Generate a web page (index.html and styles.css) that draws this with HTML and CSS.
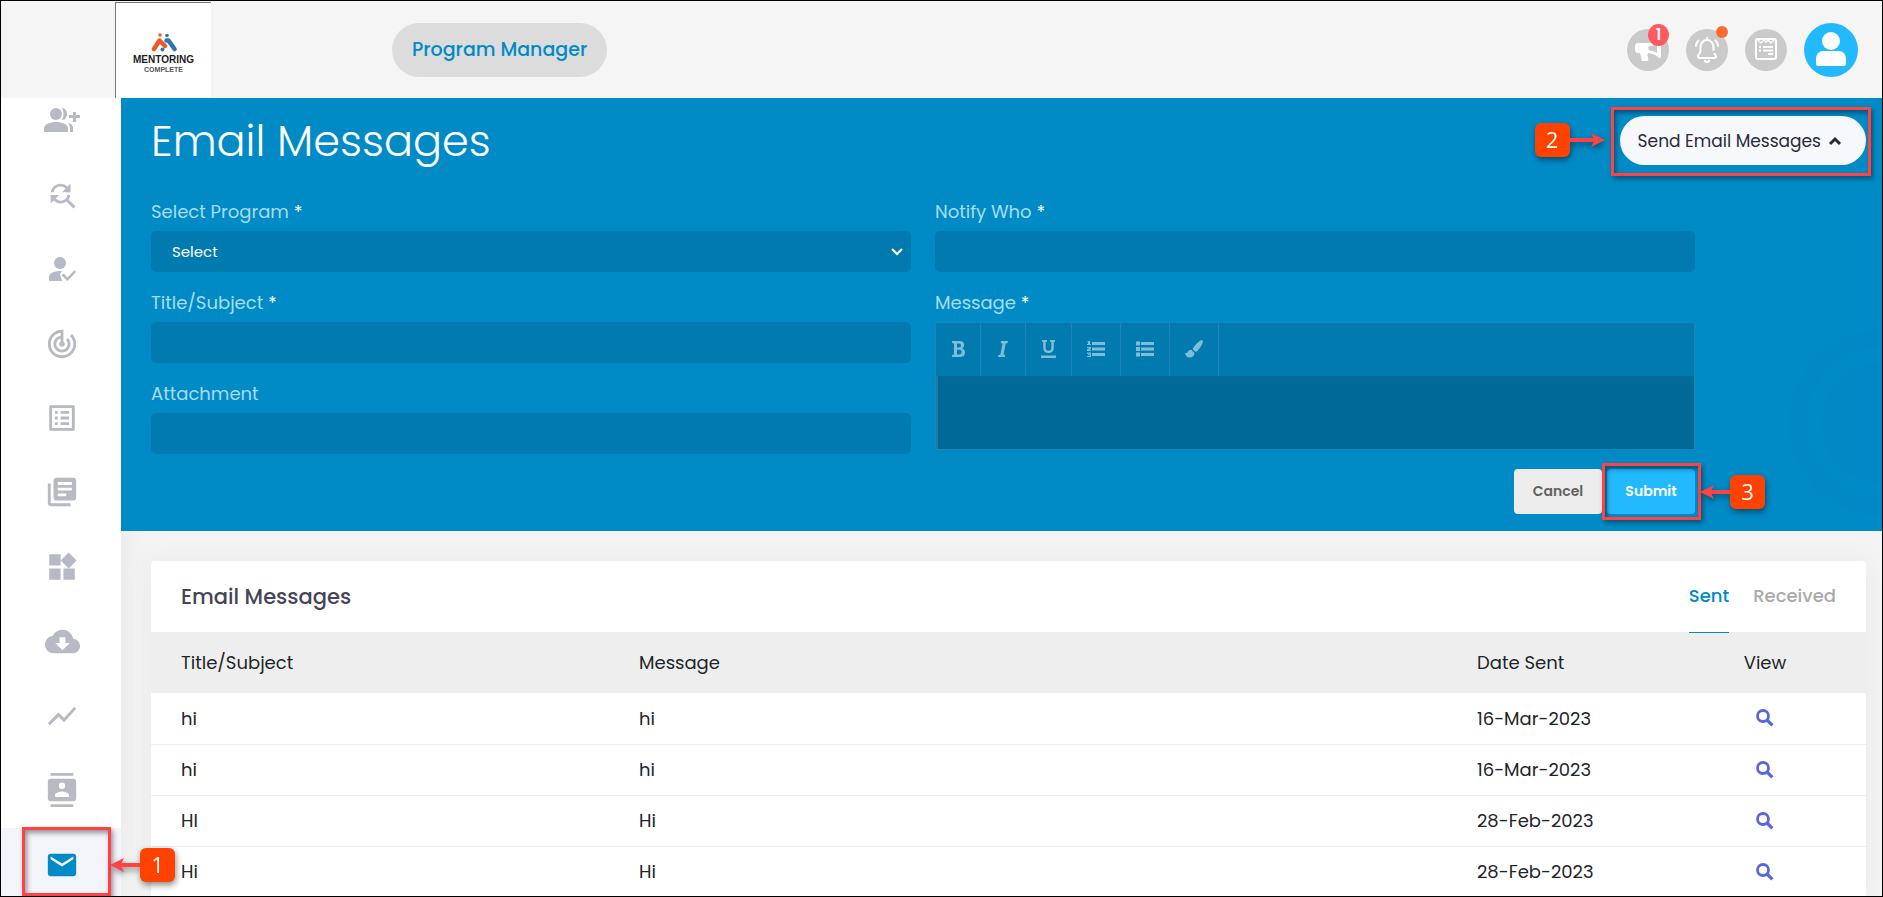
FILE: index.html
```html
<!DOCTYPE html>
<html lang="en">
<head>
<meta charset="utf-8">
<title>Email Messages</title>
<link rel="stylesheet" href="styles.css">
</head>
<body>
<svg class="sprite" aria-hidden="true">
  <symbol id="search" viewBox="0 0 18 18"><circle cx="7" cy="7" r="5.500" fill="none" stroke="currentColor" stroke-width="2.800"/><path d="M11 11l5.400 5.400" stroke="currentColor" stroke-width="3.200"/></symbol>
  <symbol id="arrow-left" viewBox="0 0 30 16"><path d="M0 8L14 1l-2.500 5H30v4H11.500L14 15z" fill="currentColor"/></symbol>
</svg>
<div class="app">
  <header class="topbar">
    <a class="logo" href="#" aria-label="Mentoring Complete">
      <svg class="logo-mark" viewBox="0 0 26 20" aria-hidden="true">
        <circle cx="9" cy="3" r="1.800" fill="#e8642b"/><circle cx="16" cy="3.500" r="1.800" fill="#2f76a8"/>
        <path d="M3 17L8.500 8.500 14 14" fill="none" stroke="#e8592b" stroke-width="4.500" stroke-linecap="round" stroke-linejoin="round"/>
        <path d="M15.500 8.500l2 0 6 8.500" fill="none" stroke="#2f76a8" stroke-width="4.500" stroke-linecap="round" stroke-linejoin="round"/>
        <circle cx="11.500" cy="17.500" r="2" fill="#2f76a8"/>
      </svg>
      <span class="logo-name">MENTORING</span>
      <span class="logo-sub">COMPLETE</span>
    </a>
    <button class="role" type="button">Program Manager</button>
    <div class="tools">
      <button class="tool" type="button" aria-label="Announcements">
        <svg width="28" height="22" viewBox="0 0 28 22" aria-hidden="true"><path d="M3 4h10.500C18 4 23 2.500 24.500 1H27v18h-2c-2-2.500-6-4.500-11-5l-.5 2 1 5-1 1H8l-2-8H3l-2-2V6z" fill="#fff"/><path d="M14.500 7.500C18 7 21 6 23 5v9c-2-1.500-5-2.500-8.500-3z" fill="#cacaca"/></svg>
        <span class="badge">1</span>
      </button>
      <button class="tool" type="button" aria-label="Notifications">
        <svg width="24" height="26" viewBox="0 0 24 26" fill="none" stroke="#fff" stroke-width="2" stroke-linecap="round" stroke-linejoin="round" aria-hidden="true"><path d="M12 1v2M18.500 13V10a6.500 7 0 0 0-13 0v4c0 2-2.500 3.500-2.500 5.500 0 1 1 1.500 2 1.500h14c1 0 2-.5 2-1.500 0-1-.8-1.800-1.500-2.700M10 23.500a2 1.500 0 0 0 4 0M3.500 3.500Q1 6 1 9M20.500 3.500Q23 6 23 9"/></svg>
        <span class="dot"></span>
      </button>
      <button class="tool" type="button" aria-label="Notes">
        <svg width="22" height="24" viewBox="0 0 22 24" fill="none" stroke="#fff" stroke-width="2" aria-hidden="true"><rect x="1" y="1" width="20" height="20" rx="2"/><path d="M3 2l3 3 3-3 2 2 2-2 3 3 3-3" stroke-width="1.400"/><path d="M4 9h2M8 9h10M4 12.500h2M8 12.500h10M13 16h5"/></svg>
      </button>
      <button class="avatar" type="button" aria-label="Profile">
        <svg width="32" height="36" viewBox="0 0 32 36" fill="#fff" aria-hidden="true"><circle cx="16" cy="9" r="9"/><path d="M8 19h16a7 8 0 0 1 7 8v5q0 2-2 2H3q-2 0-2-2v-5a7 8 0 0 1 7-8z"/></svg>
      </button>
    </div>
  </header>

  <div class="body">
    <nav class="side" aria-label="Main">
      <a href="#" aria-label="Add users"><svg width="36" height="26" viewBox="0 0 36 26"><circle cx="12" cy="7" r="6"/><path d="M0 25v-4c0-4 7-6 12-6s12 2 12 6v4zM18 1c3 0 5 3 5 6s-2 6-5 6q3-6 0-12zM24 16q5 1 5 5v4h-3v-4q0-3-2-5zM29 5h3v3h4v3h-4v4h-3v-4h-4V8h4z"/></svg></a>
      <a href="#" aria-label="Find match"><svg width="34" height="34" viewBox="0 0 24 24"><path d="M11 6c1.380 0 2.630.56 3.540 1.460L12 10h6V4l-2.050 2.050A6.976 6.976 0 0 0 11 4c-3.530 0-6.430 2.610-6.920 6H6.100A5 5 0 0 1 11 6zm5.640 9.140A6.890 6.890 0 0 0 17.920 12H15.900a5 5 0 0 1-4.900 4c-1.380 0-2.630-.56-3.540-1.460L10 12H4v6l2.050-2.050A6.976 6.976 0 0 0 11 18c1.550 0 2.980-.51 4.140-1.360L20 21.490 21.490 20z"/></svg></a>
      <a href="#" aria-label="Approvals"><svg width="28" height="24" viewBox="0 0 28 24"><circle cx="12" cy="6" r="6"/><path d="M1 24v-4c0-4 6-6 11-6h2l-2 3 2 7zM13.500 18.500l2-2 4 4 7-7.500 1.500 2-8.500 9z"/></svg></a>
      <a href="#" aria-label="Goals"><svg width="34" height="34" viewBox="0 0 24 24"><path d="M19.070 4.930l-1.410 1.410A8.014 8.014 0 0 1 20 12c0 4.420-3.580 8-8 8s-8-3.580-8-8c0-4.080 3.050-7.440 7-7.930v2.020C8.160 6.570 6 9.030 6 12c0 3.310 2.690 6 6 6s6-2.690 6-6c0-1.660-.67-3.160-1.760-4.240l-1.410 1.410C15.550 9.900 16 10.900 16 12c0 2.210-1.790 4-4 4s-4-1.790-4-4c0-1.860 1.280-3.410 3-3.860v2.140c-.6.350-1 .98-1 1.720 0 1.100.9 2 2 2s2-.9 2-2c0-.74-.4-1.380-1-1.720V2h-1C6.480 2 2 6.480 2 12s4.480 10 10 10 10-4.480 10-10c0-2.760-1.120-5.260-2.930-7.070z"/></svg></a>
      <a href="#" aria-label="Surveys"><svg width="34" height="34" viewBox="0 0 24 24"><path d="M19 5v14H5V5h14m1.100-2H3.900c-.5 0-.9.4-.9.900v16.200c0 .4.400.9.900.9h16.200c.4 0 .9-.5.900-.9V3.900c0-.5-.5-.9-.9-.9zM11 7h6v2h-6V7zm0 4h6v2h-6v-2zm0 4h6v2h-6v-2zM7 7h2v2H7V7zm0 4h2v2H7v-2zm0 4h2v2H7v-2z"/></svg></a>
      <a href="#" aria-label="Library"><svg width="34" height="34" viewBox="0 0 24 24"><path d="M4 6H2v14c0 1.100.9 2 2 2h14v-2H4V6zm16-4H8c-1.100 0-2 .9-2 2v12c0 1.100.9 2 2 2h12c1.100 0 2-.9 2-2V4c0-1.100-.9-2-2-2zm-1 9H9V9h10v2zm-4 4H9v-2h6v2zm4-8H9V5h10v2z"/></svg></a>
      <a href="#" aria-label="Widgets"><svg width="34" height="34" viewBox="0 0 24 24"><path d="M13 13v8h8v-8h-8zM3 21h8v-8H3v8zM3 3v8h8V3H3zm13.660-1.310L11 7.340 16.660 13l5.660-5.660-5.660-5.650z"/></svg></a>
      <a href="#" aria-label="Downloads"><svg width="35" height="35" viewBox="0 0 24 24"><path d="M19.350 10.040A7.490 7.490 0 0 0 12 4C9.110 4 6.600 5.640 5.350 8.040A5.994 5.994 0 0 0 0 14c0 3.310 2.690 6 6 6h13c2.760 0 5-2.240 5-5 0-2.640-2.050-4.780-4.650-4.960zM17 13l-5 5-5-5h3V9h4v4h3z"/></svg></a>
      <a href="#" aria-label="Reports"><svg width="34" height="34" viewBox="0 0 24 24"><path d="M3.500 18.490l6-6.010 4 4L22 6.920l-1.410-1.410-7.090 7.970-4-4L2 16.990z"/></svg></a>
      <a href="#" aria-label="Contacts"><svg width="34" height="34" viewBox="0 0 24 24"><path d="M20 0H4v2h16V0zM4 24h16v-2H4v2zM20 4H4c-1.100 0-2 .9-2 2v12c0 1.100.9 2 2 2h16c1.100 0 2-.9 2-2V6c0-1.100-.9-2-2-2zm-8 2.750a2.250 2.250 0 1 1 0 4.500 2.250 2.250 0 0 1 0-4.500zM17 17H7v-1.500c0-1.670 3.330-2.500 5-2.500s5 .83 5 2.500V17z"/></svg></a>
      <a href="#" class="active" aria-label="Email" aria-current="page"><svg width="34" height="34" viewBox="0 0 24 24"><path d="M20 4H4c-1.100 0-1.990.9-1.990 2L2 18c0 1.100.9 2 2 2h16c1.100 0 2-.9 2-2V6c0-1.100-.9-2-2-2zm0 4l-8 5-8-5V6l8 5 8-5v2z"/></svg>
        <span class="mark mark-mail"></span>
        <span class="step step-mail"><svg width="30" height="16" aria-hidden="true"><use href="#arrow-left"/></svg><b>1</b></span>
      </a>
    </nav>

    <main class="main">
      <section class="compose">
        <div class="compose-head">
          <h1>Email Messages</h1>
          <div class="target">
            <button class="send" type="button">Send Email Messages
              <svg width="14" height="10" viewBox="0 0 14 10" aria-hidden="true"><path d="M2 8l5-5 5 5" fill="none" stroke="currentColor" stroke-width="3"/></svg>
            </button>
            <span class="mark mark-send"></span>
            <span class="step step-send"><b>2</b><svg width="35" height="16" viewBox="0 0 35 16" aria-hidden="true"><path d="M35 8L21 1l2.500 5H0v4h23.500L21 15z" fill="currentColor"/></svg></span>
          </div>
        </div>
        <form class="form">
          <div class="col">
            <div class="field">
              <label for="program">Select Program <i>*</i></label>
              <div class="select">
                <select id="program"><option>Select</option></select>
                <svg width="14" height="10" viewBox="0 0 14 10" aria-hidden="true"><path d="M2 2l5 5 5-5" fill="none" stroke="#fff" stroke-width="2.200"/></svg>
              </div>
            </div>
            <div class="field"><label for="subject">Title/Subject <i>*</i></label><input id="subject" type="text"></div>
            <div class="field"><label for="file">Attachment</label><input id="file" type="text"></div>
          </div>
          <div class="col">
            <div class="field"><label for="who">Notify Who <i>*</i></label><input id="who" type="text"></div>
            <div class="field">
              <label for="message">Message <i>*</i></label>
              <div class="editor">
                <div class="bar">
                  <button type="button" aria-label="Bold"><svg width="13" height="16" viewBox="0 0 13 16"><path fill-rule="evenodd" d="M0 0h7.500c3 0 4.700 1.500 4.700 4 0 1.700-.8 2.800-2 3.400 1.700.5 2.800 1.900 2.800 4 0 3-2 4.600-5.200 4.600H0v-2l2-.5v-11L0 2zm5 2.500v4h2q2 0 2-2t-2-2zm0 6.300v4.700h2.300q2.400 0 2.400-2.400T7.300 8.800z"/></svg></button>
                  <button type="button" aria-label="Italic"><svg width="10" height="16" viewBox="0 0 10 16"><path d="M3 0h7l-.4 2-1.900.4L5.500 13.600l1.700.4-.4 2H0l.4-2 2-.4L4.600 2.400 2.600 2z"/></svg></button>
                  <button type="button" aria-label="Underline"><svg width="15" height="18" viewBox="0 0 15 18"><path d="M1 0h5v1.800l-1.300.3V8q0 2.700 2.800 2.700T10.300 8V2.100L9 1.800V0h5v1.800l-1.200.3V8c0 3.300-2 5-5.300 5s-5.300-1.700-5.300-5V2.100L1 1.800zM0 15.500h15V18H0z"/></svg></button>
                  <button type="button" aria-label="Numbered list"><svg width="18" height="16" viewBox="0 0 18 16"><path d="M5 1h13v3H5zM5 6.500h13v3H5zM5 12h13v3H5zM1 0h2v3h1v1H0V3h1V1H0zM0 6h4v2L2 9h2v1H0V8.500L2.500 7H0zM0 11.500h4V16H0v-1h3v-.7H1v-1h2v-.6H0z"/></svg></button>
                  <button type="button" aria-label="Bulleted list"><svg width="18" height="16" viewBox="0 0 18 16"><path d="M5 1h13v3H5zM5 6.500h13v3H5zM5 12h13v3H5zM0 .5h4v4H0zM0 6h4v4H0zM0 11.500h4v4H0z"/></svg></button>
                  <button type="button" aria-label="Clear style"><svg width="18" height="18" viewBox="0 0 18 18"><path d="M16.500 0q1.500 0 1.500 1.500c-1 4-4 8.500-7 10.500-1-.2-3-2-3.300-3.500C10 5 14 1 16.500 0zM6.500 9.700q1 2 3 3c0 3-2 4.800-4.700 4.800C2 17.500.3 16 0 12.500c1 .7 1.700.8 2.300 0C3 11 4.300 9.800 6.500 9.700z"/></svg></button>
                </div>
                <textarea id="message"></textarea>
              </div>
            </div>
            <div class="actions">
              <button class="btn" type="button">Cancel</button>
              <div class="target">
                <button class="btn primary" type="submit">Submit</button>
                <span class="mark mark-submit"></span>
                <span class="step step-submit"><svg width="30" height="16" aria-hidden="true"><use href="#arrow-left"/></svg><b>3</b></span>
              </div>
            </div>
          </div>
        </form>
      </section>

      <section class="card">
        <div class="card-head">
          <h2>Email Messages</h2>
          <div class="tabs"><a href="#" class="on">Sent</a><a href="#">Received</a></div>
        </div>
        <table>
          <thead><tr><th class="c-title">Title/Subject</th><th>Message</th><th class="c-date">Date Sent</th><th class="view">View</th></tr></thead>
          <tbody>
            <tr><td>hi</td><td>hi</td><td>16-Mar-2023</td><td class="view"><a href="#" aria-label="View"><svg width="18" height="18"><use href="#search"/></svg></a></td></tr>
            <tr><td>hi</td><td>hi</td><td>16-Mar-2023</td><td class="view"><a href="#" aria-label="View"><svg width="18" height="18"><use href="#search"/></svg></a></td></tr>
            <tr><td>HI</td><td>Hi</td><td>28-Feb-2023</td><td class="view"><a href="#" aria-label="View"><svg width="18" height="18"><use href="#search"/></svg></a></td></tr>
            <tr><td>Hi</td><td>Hi</td><td>28-Feb-2023</td><td class="view"><a href="#" aria-label="View"><svg width="18" height="18"><use href="#search"/></svg></a></td></tr>
          </tbody>
        </table>
      </section>
    </main>
  </div>
</div>
</body>
</html>
```
FILE: styles.css
```css
* { box-sizing: border-box; }
body { margin: 0; font-family: Poppins, Inter, "Open Sans", sans-serif; font-size: 18px; color: #212529; background: #f4f4f4; }
button, input, select, textarea { font: inherit; color: inherit; border: 0; margin: 0; padding: 0; }
a { color: inherit; text-decoration: none; }
h1, h2 { margin: 0; }
svg { display: block; }
.sprite { position: absolute; width: 0; height: 0; }

.app { height: 100vh; border: 1px solid #000; overflow: hidden; display: flex; flex-direction: column; }

/* top bar */
.topbar { flex: none; height: 97px; background: #f5f5f5; display: flex; align-items: center; padding: 0 24px 0 114px; position: relative; z-index: 1; }
.logo { align-self: stretch; width: 96px; margin-top: 1px; background: #fff; border-left: 1px solid #777; border-top: 1px solid #777; display: flex; flex-direction: column; align-items: center; padding-top: 29px; color: #222; font-family: "Liberation Sans", sans-serif; font-weight: 700; }
.logo-mark { width: 26px; height: 20px; }
.logo-name { font-size: 10px; line-height: 12px; margin-top: 2px; }
.logo-sub { font-size: 7px; line-height: 7px; color: #555; }
.role { height: 54px; min-width: 213px; margin-left: 181px; padding: 0 20px; border-radius: 27px; background: #dcdcdc; color: #008bc7; font-size: 19px; font-weight: 500; }
.tools { margin-left: auto; display: flex; align-items: center; gap: 17px; }
.tool, .avatar { border-radius: 50%; display: flex; align-items: center; justify-content: center; position: relative; }
.tool { width: 42px; height: 42px; background: #cacaca; }
.avatar { width: 54px; height: 54px; background: #22b9ff; }
.badge { position: absolute; right: 0; top: -5px; width: 21px; height: 22px; border-radius: 50%; background: #ff5a5f; color: #fff; font-size: 15px; line-height: 21px; font-weight: 600; }
.dot { position: absolute; right: 0; top: -3px; width: 12px; height: 12px; border-radius: 50%; background: #ff6a2f; }

/* sidebar */
.body { flex: 1; display: flex; min-height: 0; }
.side { flex: none; width: 120px; margin: -15px 0 -6px; background: #fff; display: flex; flex-direction: column; box-shadow: 0 0 30px rgba(0, 0, 0, .06); }
.side a { flex: 1; display: flex; align-items: center; justify-content: center; padding-left: 2px; position: relative; color: #b7b9c4; }
.side svg { fill: currentColor; }
.side .active { background: #f4f5fb; color: #008bc7; }

/* compose panel */
.main { flex: 1; min-width: 0; display: flex; flex-direction: column; }
.compose { background: radial-gradient(circle at 100% 75%, #0089c5 60px, #008bc7 62px 74px, #0089c5 76px 92px, #008bc7 96px); padding: 18px 16px 17px 30px; color: #fff; }
.compose-head { display: flex; justify-content: space-between; align-items: flex-start; }
h1 { font-size: 43px; line-height: 50px; font-weight: 300; }
.target { position: relative; }
.send { height: 49px; padding: 0 24px 0 18px; border-radius: 25px; background: #f7f8fb; color: #282a3c; font-size: 17px; display: flex; align-items: center; gap: 7px; }
.form { margin: 34px 171px 0 0; display: grid; grid-template-columns: 1fr 1fr; gap: 24px; }
.col { display: flex; flex-direction: column; gap: 19px; min-width: 0; }
.field { display: flex; flex-direction: column; gap: 7px; }
.field label { line-height: 24px; color: #a9dbf0; }
.field i { font-style: normal; color: #fff; }
.field input, select { width: 100%; height: 41px; padding: 0 21px; border-radius: 5px; background: #007aaf; }
.select { position: relative; }
.select select { appearance: none; display: block; font-size: 15px; }
.select svg { position: absolute; right: 7px; top: 16px; }
.editor { border: 1px solid #2084b4; background: #007aaf; }
.bar { display: flex; height: 53px; }
.bar button { background: none; border-right: 1px solid #2084b4; padding: 0 15px 2px; min-width: 45px; display: flex; align-items: center; justify-content: center; }
.bar svg { fill: #7fbcd8; }
textarea { display: block; width: 100%; height: 73px; resize: none; background: #006998; border-left: 2px solid #207aa3; }
.actions { display: flex; justify-content: flex-end; gap: 5px; }
.btn { min-width: 88px; height: 45px; border-radius: 4px; background: #ededed; color: #626262; font-size: 14px; font-weight: 600; }
.primary { background: #22b9ff; color: #fff; }

/* message list */
.card { margin: 30px 16px 0 30px; background: #fff; border-radius: 4px 4px 0 0; box-shadow: 0 0 30px rgba(0, 0, 0, .05); flex: none; }
.card-head { height: 71px; padding: 0 30px; display: flex; justify-content: space-between; align-items: center; }
h2 { font-size: 21px; font-weight: 500; color: #464457; }
.tabs { align-self: stretch; display: flex; gap: 24px; }
.tabs a { height: 72px; line-height: 70px; color: #aaa; font-weight: 500; position: relative; }
.tabs .on { color: #008bc7; border-bottom: 1px solid #008bc7; }
table { width: 100%; border-collapse: collapse; table-layout: fixed; }
th, td { text-align: left; padding: 0 0 0 30px; font-weight: 400; }
th { height: 61px; background: #eee; }
td { height: 51px; border-bottom: 1px solid #ebedf2; }
.c-title { width: 458px; }
.c-date { width: 217px; }
th.view, td.view { width: 202px; text-align: center; padding: 0; }
.view svg { margin: 0 auto; color: #5867dd; }

/* walkthrough callouts */
.mark { position: absolute; border: 3px solid #ff4243; box-shadow: 2px 3px 5px rgba(0, 0, 0, .4), inset 2px 3px 5px rgba(0, 0, 0, .4); pointer-events: none; }
.mark-mail { left: 21px; right: 10px; top: -1px; bottom: 6px; }
.mark-send { inset: -9px -5px -11px -9px; }
.mark-submit { inset: -6px -6px -6px -5px; }
.step { position: absolute; display: flex; align-items: center; color: #ff4243; z-index: 2; filter: drop-shadow(1px 3px 3px rgba(0, 0, 0, .45)); }
.step b { width: 35px; height: 34px; border-radius: 6px; background: #ff4200; color: #fff; font: 400 22px/32px "Open Sans", sans-serif; text-align: center; }
.side .step svg { fill: none; }
.step-mail { left: 109px; top: 20px; }
.step-send { right: 100%; margin-right: 15px; top: 7px; }
.step-submit { left: 100%; margin-left: 5px; top: 6px; }
```
